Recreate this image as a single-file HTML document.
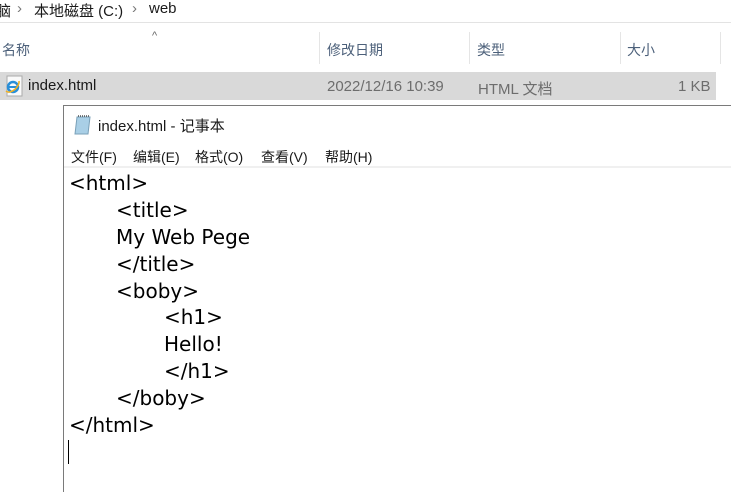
<!DOCTYPE html>
<html><head><meta charset="utf-8"><style>
body{margin:0;width:731px;height:492px;overflow:hidden;background:#fff;position:relative;font-family:"Liberation Sans","Noto Sans CJK SC",sans-serif;}
.a{position:absolute;white-space:pre;}
.hdr{font-size:14px;color:#4c607a;}
.g{color:#6d6d6d;font-size:15px;}
.c{position:absolute;white-space:pre;font-size:20px;color:#000;font-family:"DejaVu Sans","Liberation Sans",sans-serif;line-height:24px}
.m{position:absolute;font-size:14px;color:#1a1a1a;top:147px}
</style></head><body>
<div class="a" style="left:-4px;top:0;font-size:15px;color:#1a1a1a">脑</div>
<div class="a" style="left:17px;top:0;font-size:15px;color:#777">›</div>
<div class="a" style="left:34px;top:0;font-size:15px;color:#1a1a1a">本地磁盘 (C:)</div>
<div class="a" style="left:132px;top:0;font-size:15px;color:#777">›</div>
<div class="a" style="left:149px;top:0;font-size:15px;color:#1a1a1a">web</div>
<div class="a" style="left:0;top:22px;width:731px;height:1px;background:#e3e3e3"></div>
<div class="a" style="left:152px;top:30px;font-size:11px;color:#666">^</div>
<div class="a hdr" style="left:2px;top:40px">名称</div>
<div class="a" style="left:319px;top:32px;width:1px;height:32px;background:#e5e5e5"></div>
<div class="a hdr" style="left:327px;top:40px">修改日期</div>
<div class="a" style="left:469px;top:32px;width:1px;height:32px;background:#e5e5e5"></div>
<div class="a hdr" style="left:477px;top:40px">类型</div>
<div class="a" style="left:620px;top:32px;width:1px;height:32px;background:#e5e5e5"></div>
<div class="a hdr" style="left:627px;top:40px">大小</div>
<div class="a" style="left:720px;top:32px;width:1px;height:32px;background:#e5e5e5"></div>
<div class="a" style="left:0;top:72px;width:716px;height:28px;background:#d9d9d9"></div>
<svg class="a" style="left:4px;top:75px" width="20" height="22" viewBox="0 0 20 22"><rect x="3" y="1" width="15" height="20" fill="#fafafa" stroke="#aaa"/><circle cx="9" cy="12" r="5" fill="none" stroke="#2a8fd8" stroke-width="2.5"/><path d="M4 12h10" stroke="#2a8fd8" stroke-width="2"/><path d="M2 16 C6 20 16 12 15 6" stroke="#f0b020" stroke-width="1.5" fill="none"/></svg>
<div class="a" style="left:28px;top:77px;font-size:15px;color:#1a1a1a">index.html</div>
<div class="a g" style="left:327px;top:78px">2022/12/16 10:39</div>
<div class="a g" style="left:478px;top:78px">HTML 文档</div>
<div class="a g" style="left:678px;top:78px">1 KB</div>
<div class="a" style="left:63px;top:105px;width:668px;height:1px;background:#7a7a7a"></div>
<div class="a" style="left:63px;top:105px;width:1px;height:387px;background:#7a7a7a"></div>
<svg class="a" style="left:73px;top:114px" width="20" height="22" viewBox="0 0 20 22"><path d="M4 3h13l-2 17H2z" fill="#a9cfe6" stroke="#7aa0b8"/><path d="M5 2h11" stroke="#555" stroke-width="1.5" stroke-dasharray="1 1"/></svg>
<div class="a" style="left:98px;top:115px;font-size:15px;color:#1a1a1a">index.html - 记事本</div>
<div class="m" style="left:71px">文件(F)</div>
<div class="m" style="left:133px">编辑(E)</div>
<div class="m" style="left:195px">格式(O)</div>
<div class="m" style="left:261px">查看(V)</div>
<div class="m" style="left:325px">帮助(H)</div>
<div class="a" style="left:64px;top:166px;width:667px;height:2px;background:#f0f0f0"></div>
<div class="c" style="left:69px;top:171px">&lt;html&gt;</div>
<div class="c" style="left:116px;top:198px">&lt;title&gt;</div>
<div class="c" style="left:116px;top:225px">My Web Pege</div>
<div class="c" style="left:116px;top:252px">&lt;/title&gt;</div>
<div class="c" style="left:116px;top:279px">&lt;boby&gt;</div>
<div class="c" style="left:164px;top:305px">&lt;h1&gt;</div>
<div class="c" style="left:164px;top:332px">Hello!</div>
<div class="c" style="left:164px;top:359px">&lt;/h1&gt;</div>
<div class="c" style="left:116px;top:386px">&lt;/boby&gt;</div>
<div class="c" style="left:69px;top:413px">&lt;/html&gt;</div>
<div class="a" style="left:68px;top:440px;width:1px;height:24px;background:#000"></div>
</body></html>
